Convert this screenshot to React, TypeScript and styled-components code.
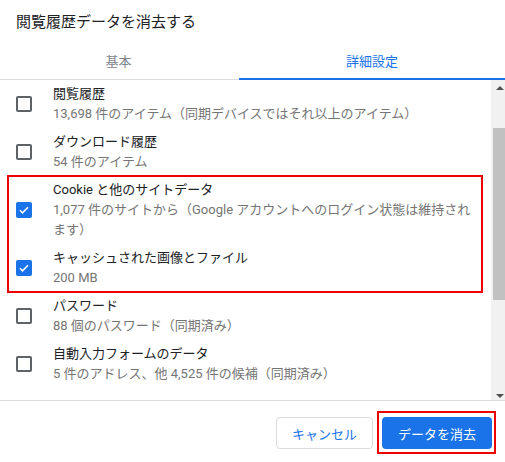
import styled, { createGlobalStyle } from 'styled-components';

const GlobalStyle = createGlobalStyle`
  html, body {
    margin: 0;
    padding: 0;
    background: #ffffff;
    overflow: hidden;
  }
  body {
    font-family: Roboto, "Noto Sans CJK JP", sans-serif;
    -webkit-font-smoothing: antialiased;
  }
`;

interface DataItem {
  label: string;
  sub: string;
  checked: boolean;
}

const topItems: DataItem[] = [
  { label: '閲覧履歴', sub: '13,698 件のアイテム（同期デバイスではそれ以上のアイテム）', checked: false },
  { label: 'ダウンロード履歴', sub: '54 件のアイテム', checked: false },
];

const markedItems: DataItem[] = [
  {
    label: 'Cookie と他のサイトデータ',
    sub: '1,077 件のサイトから（Google アカウントへのログイン状態は維持されます）',
    checked: true,
  },
  { label: 'キャッシュされた画像とファイル', sub: '200 MB', checked: true },
];

const bottomItems: DataItem[] = [
  { label: 'パスワード', sub: '88 個のパスワード（同期済み）', checked: false },
  { label: '自動入力フォームのデータ', sub: '5 件のアドレス、他 4,525 件の候補（同期済み）', checked: false },
  { label: 'コンテンツの設定', sub: '', checked: false },
];

const CheckRow = ({ item }: { item: DataItem }) => (
  <Row>
    <Box $checked={item.checked}>
      {item.checked && (
        <svg width="12" height="12" viewBox="0 0 24 24">
          <path d="M4 12.5l5 5L20 6.5" fill="none" stroke="#fff" strokeWidth="3.2" />
        </svg>
      )}
    </Box>
    <RowText>
      <Label>{item.label}</Label>
      {item.sub && <Sub>{item.sub}</Sub>}
    </RowText>
  </Row>
);

export default function App() {
  return (
    <>
      <GlobalStyle />
      <Dialog>
        <Title>閲覧履歴データを消去する</Title>
        <Tabs>
          <Tab>基本</Tab>
          <Tab $active>詳細設定</Tab>
        </Tabs>
        <Body>
          <List>
            {topItems.map(i => <CheckRow key={i.label} item={i} />)}
            <Marked>
              {markedItems.map(i => <CheckRow key={i.label} item={i} />)}
            </Marked>
            {bottomItems.map(i => <CheckRow key={i.label} item={i} />)}
          </List>
          <Scrollbar>
            <Arrow $up />
            <Thumb />
            <Arrow />
          </Scrollbar>
        </Body>
        <Footer>
          <CancelButton>キャンセル</CancelButton>
          <Marked $button>
            <PrimaryButton>データを消去</PrimaryButton>
          </Marked>
        </Footer>
      </Dialog>
    </>
  );
}

const Dialog = styled.div`
  width: 505px;
  height: 462px;
  display: flex;
  flex-direction: column;
  background: #ffffff;
`;

const Title = styled.div`
  height: 40px;
  display: flex;
  align-items: center;
  padding-left: 16px;
  font-size: 15px;
  color: #202124;
`;

const Tabs = styled.div`
  height: 39px;
  display: grid;
  grid-template-columns: 237px 1fr;
  border-bottom: 1px solid #dadce0;
`;

const Tab = styled.div<{ $active?: boolean }>`
  display: flex;
  align-items: center;
  justify-content: center;
  padding-top: 1px;
  font-size: 13px;
  color: ${p => (p.$active ? '#1a73e8' : '#80868b')};
  box-shadow: ${p => (p.$active ? 'inset 0 -2px 0 #1a73e8' : 'none')};
  margin-bottom: -1px;
  margin-left: ${p => (p.$active ? '2px' : '0')};
`;

const Body = styled.div`
  height: 320px;
  display: grid;
  grid-template-columns: 1fr 14px;
  border-bottom: 1px solid #dadce0;
  overflow: hidden;
`;

const List = styled.div`
  display: flex;
  flex-direction: column;
  overflow: hidden;
`;

const Marked = styled.div<{ $button?: boolean }>`
  position: relative;
  display: flex;
  flex-direction: column;

  &::after {
    content: '';
    position: absolute;
    pointer-events: none;
    border: 2px solid #ee0000;
    left: ${p => (p.$button ? '-5px' : '7px')};
    right: ${p => (p.$button ? '-4px' : '8px')};
    top: ${p => (p.$button ? '-6px' : '-1px')};
    bottom: ${p => (p.$button ? '-5px' : '-1px')};
  }
`;

const Row = styled.div`
  flex-shrink: 0;
  display: flex;
  align-items: center;
  gap: 21px;
  padding: 4px 16px 4px 16px;
  min-height: 40px;
`;

const Box = styled.div<{ $checked: boolean }>`
  flex-shrink: 0;
  width: 16px;
  height: 16px;
  box-sizing: border-box;
  border-radius: 2px;
  display: flex;
  align-items: center;
  justify-content: center;
  background: ${p => (p.$checked ? '#1a73e8' : 'transparent')};
  border: ${p => (p.$checked ? 'none' : '2px solid #5f6368')};
`;

const RowText = styled.div`
  display: flex;
  flex-direction: column;
  padding-right: 2px;
`;

const Label = styled.div`
  font-size: 13px;
  line-height: 20px;
  color: #202124;
`;

const Sub = styled.div`
  font-size: 13px;
  line-height: 20px;
  color: #757575;
`;

const Scrollbar = styled.div`
  background: #f1f1f1;
  display: flex;
  flex-direction: column;
`;

const Arrow = styled.div<{ $up?: boolean }>`
  height: 17px;
  display: flex;
  align-items: center;
  padding-left: 5px;

  &::before {
    content: '';
    width: 0;
    height: 0;
    border-left: 4px solid transparent;
    border-right: 4px solid transparent;
    ${p =>
      p.$up
        ? 'border-bottom: 4px solid #505050; margin-top: -1px;'
        : 'border-top: 4px solid #505050; margin-top: 8px;'}
  }
`;

const Thumb = styled.div`
  margin: 31px 0 auto 2px;
  height: 172px;
  background: #c1c1c1;
`;

const Footer = styled.div`
  flex: 1;
  display: flex;
  justify-content: flex-end;
  align-items: flex-start;
  gap: 9px;
  padding: 16px 13px 0 0;
`;

const BaseButton = styled.button`
  height: 32px;
  box-sizing: border-box;
  border-radius: 4px;
  font-family: Roboto, "Noto Sans CJK JP", sans-serif;
  font-size: 13px;
  font-weight: 400;
  padding: 0 15px;
  cursor: pointer;
`;

const CancelButton = styled(BaseButton)`
  width: 97px;
  background: #ffffff;
  color: #1a73e8;
  border: 1px solid #dadce0;
`;

const PrimaryButton = styled(BaseButton)`
  width: 110px;
  background: #1a73e8;
  color: #ffffff;
  border: none;
`;
